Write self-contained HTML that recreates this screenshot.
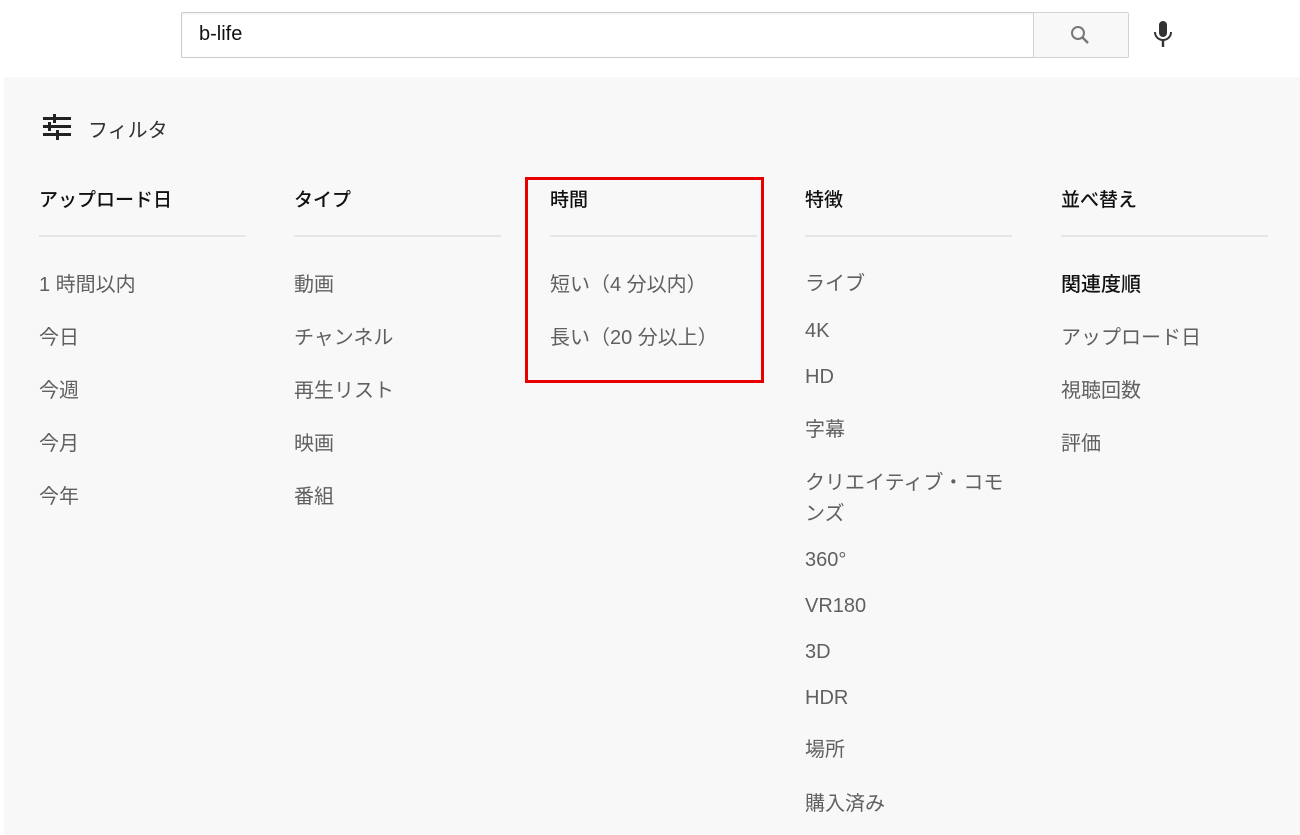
<!DOCTYPE html>
<html><head><meta charset="utf-8"><style>
body{margin:0;width:1300px;height:835px;background:#fff;font-family:"Liberation Sans","Noto Sans CJK JP",sans-serif;position:relative;overflow:hidden}
.a{position:absolute;white-space:nowrap}
.panel{position:absolute;left:4px;top:77px;width:1296px;height:758px;background:#f8f8f8}
.h{font-size:19px;color:#111;font-weight:500}
.i{font-size:20px;color:#606060}
.ln{position:absolute;height:2px;background:#e6e6e6;width:207px;top:235px}
</style></head><body>
<div class="a" style="left:181px;top:12px;width:852px;height:44px;border:1px solid #ccc;border-right:none;border-radius:2px 0 0 2px;box-shadow:inset 0 1px 2px #eee"></div>
<div class="a" style="left:199px;top:23px;font-size:20px;color:#111">b-life</div>
<div class="a" style="left:1033px;top:12px;width:94px;height:44px;border:1px solid #d3d3d3;background:#f8f8f8;border-radius:0 2px 2px 0"></div>
<svg class="a" style="left:1068px;top:23px" width="24" height="24" viewBox="0 0 24 24"><circle cx="10" cy="10" r="6" fill="none" stroke="#777" stroke-width="2"/><path d="M14.5 14.5L20 20" stroke="#777" stroke-width="2.4"/></svg>
<svg class="a" style="left:1151px;top:20px" width="24" height="30" viewBox="0 0 24 30"><rect x="8" y="1" width="8" height="16" rx="4" fill="#333"/><path d="M4 12c0 5 4 8 8 8s8-3 8-8" fill="none" stroke="#333" stroke-width="2"/><path d="M12 20v7" stroke="#333" stroke-width="2.4"/></svg>
<div class="panel"></div>
<svg class="a" style="left:42px;top:114px" width="30" height="26" viewBox="0 0 30 26"><g fill="#222"><rect x="1" y="3" width="10" height="3"/><rect x="14" y="3" width="15" height="3"/><rect x="11" y="0" width="3" height="9"/><rect x="1" y="11" width="5" height="3"/><rect x="9" y="11" width="20" height="3"/><rect x="6" y="8" width="3" height="9"/><rect x="1" y="19" width="13" height="3"/><rect x="17" y="19" width="12" height="3"/><rect x="14" y="16" width="3" height="10"/></g></svg>
<div class="a" style="left:88px;top:114px;font-size:20px;color:#333">フィルタ</div>
<div class="a h" style="left:39px;top:185px">アップロード日</div>
<div class="a h" style="left:294px;top:185px">タイプ</div>
<div class="a h" style="left:550px;top:185px">時間</div>
<div class="a h" style="left:805px;top:185px">特徴</div>
<div class="a h" style="left:1061px;top:185px">並べ替え</div>
<div class="ln" style="left:39px"></div><div class="ln" style="left:294px"></div><div class="ln" style="left:550px"></div><div class="ln" style="left:805px"></div><div class="ln" style="left:1061px"></div>
<div class="a i" style="left:39px;top:268px">1 時間以内</div>
<div class="a i" style="left:39px;top:321px">今日</div>
<div class="a i" style="left:39px;top:374px">今週</div>
<div class="a i" style="left:39px;top:427px">今月</div>
<div class="a i" style="left:39px;top:480px">今年</div>
<div class="a i" style="left:294px;top:268px">動画</div>
<div class="a i" style="left:294px;top:321px">チャンネル</div>
<div class="a i" style="left:294px;top:374px">再生リスト</div>
<div class="a i" style="left:294px;top:427px">映画</div>
<div class="a i" style="left:294px;top:480px">番組</div>
<div class="a i" style="left:550px;top:268px">短い（4 分以内）</div>
<div class="a i" style="left:550px;top:321px">長い（20 分以上）</div>
<div class="a i" style="left:805px;top:267px">ライブ</div>
<div class="a i" style="left:805px;top:320px">4K</div>
<div class="a i" style="left:805px;top:366px">HD</div>
<div class="a i" style="left:805px;top:413px">字幕</div>
<div class="a i" style="left:805px;top:466px">クリエイティブ・コモ</div>
<div class="a i" style="left:805px;top:497px">ンズ</div>
<div class="a i" style="left:805px;top:549px">360°</div>
<div class="a i" style="left:805px;top:595px">VR180</div>
<div class="a i" style="left:805px;top:641px">3D</div>
<div class="a i" style="left:805px;top:687px">HDR</div>
<div class="a i" style="left:805px;top:733px">場所</div>
<div class="a i" style="left:805px;top:787px">購入済み</div>
<div class="a h" style="left:1061px;top:268px;font-size:20px">関連度順</div>
<div class="a i" style="left:1061px;top:321px">アップロード日</div>
<div class="a i" style="left:1061px;top:374px">視聴回数</div>
<div class="a i" style="left:1061px;top:427px">評価</div>
<div class="a" style="left:525px;top:177px;width:233px;height:200px;border:3px solid #e60000"></div>
</body></html>
